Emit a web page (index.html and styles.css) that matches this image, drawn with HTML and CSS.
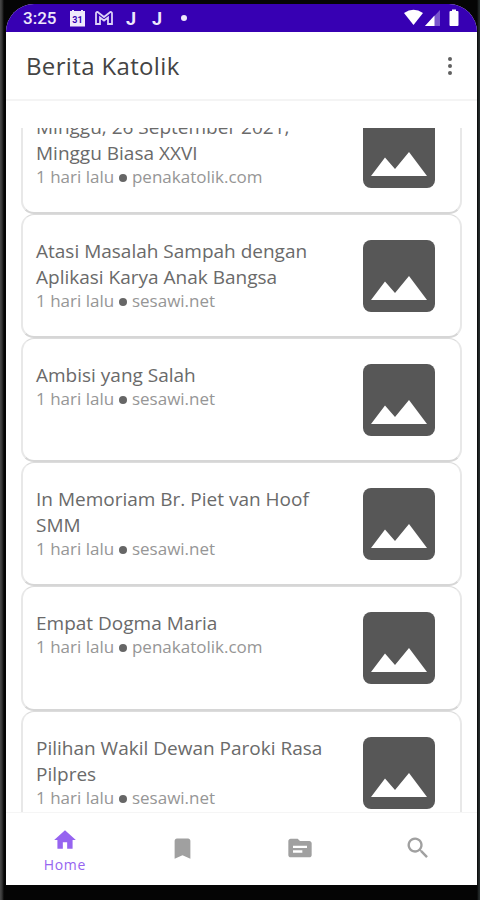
FILE: index.html
```html
<!DOCTYPE html>
<html lang="id">
<head>
  <meta charset="UTF-8">
  <title>Berita Katolik</title>
  <link rel="stylesheet" href="styles.css">
</head>
<body>
  <svg width="0" height="0" class="defs">
    <symbol id="picture" viewBox="0 0 72 72">
      <rect width="72" height="72" rx="8" fill="#575757"/>
      <path d="M8 60L22 41.500L32 53L46 36L64 60z" fill="#fff"/>
    </symbol>
  </svg>

  <div class="screen">
    <div class="status-bar">
      <span class="time">3:25</span>
      <svg class="calendar" width="17" height="17" viewBox="0 0 17 17">
        <path d="M1 1h2V0h2v1h7V0h2v1h2v15.500H1z" fill="#eee8fb"/>
        <text x="8.500" y="12.500" text-anchor="middle">31</text>
      </svg>
      <svg class="mail" width="18" height="14" viewBox="0 0 18 14">
        <path d="M1 13V2.500Q1 .5 3 1.200L9 6l6-4.800q2-.7 2 1.300V13h-4V6.500L9 9.500 5 6.500V13z" fill="none" stroke="#ddd2f7" stroke-width="1.800"/>
      </svg>
      <span class="letter">J</span>
      <span class="letter">J</span>
      <span class="dot"></span>
      <svg class="signals" width="56" height="18" viewBox="0 0 56 18">
        <path d="M0 4Q9.500-2.500 19 4L9.500 16z" fill="#fff"/>
        <path d="M36 1v16H21z" fill="#7a55cd"/>
        <path d="M30.500 6.500V17H21z" fill="#fff"/>
        <path d="M46.500 2H48V.5h4V2h1.500q1 0 1 1v13q0 1-1 1h-7q-1 0-1-1V3q0-1 1-1z" fill="#fff"/>
      </svg>
    </div>

    <header class="app-bar">
      <h1>Berita Katolik</h1>
      <div class="menu"><i></i><i></i><i></i></div>
    </header>

    <main class="news-list">
      <article class="card">
        <div class="text">
          <h2>Minggu, 26 September 2021,<br>Minggu Biasa XXVI</h2>
          <p>1 hari lalu <b></b> penakatolik.com</p>
        </div>
        <svg class="thumb"><use href="#picture"/></svg>
      </article>
      <article class="card">
        <div class="text">
          <h2>Atasi Masalah Sampah dengan<br>Aplikasi Karya Anak Bangsa</h2>
          <p>1 hari lalu <b></b> sesawi.net</p>
        </div>
        <svg class="thumb"><use href="#picture"/></svg>
      </article>
      <article class="card">
        <div class="text">
          <h2>Ambisi yang Salah</h2>
          <p>1 hari lalu <b></b> sesawi.net</p>
        </div>
        <svg class="thumb"><use href="#picture"/></svg>
      </article>
      <article class="card">
        <div class="text">
          <h2>In Memoriam Br. Piet van Hoof<br>SMM</h2>
          <p>1 hari lalu <b></b> sesawi.net</p>
        </div>
        <svg class="thumb"><use href="#picture"/></svg>
      </article>
      <article class="card">
        <div class="text">
          <h2>Empat Dogma Maria</h2>
          <p>1 hari lalu <b></b> penakatolik.com</p>
        </div>
        <svg class="thumb"><use href="#picture"/></svg>
      </article>
      <article class="card">
        <div class="text">
          <h2>Pilihan Wakil Dewan Paroki Rasa<br>Pilpres</h2>
          <p>1 hari lalu <b></b> sesawi.net</p>
        </div>
        <svg class="thumb"><use href="#picture"/></svg>
      </article>
    </main>

    <nav class="bottom-nav">
      <a class="active">
        <svg width="26" height="26" viewBox="0 0 24 24"><path d="M10 20v-6h4v6h5v-8h3L12 3 2 12h3v8z"/></svg>
        <span>Home</span>
      </a>
      <a><svg width="27" height="27" viewBox="0 0 24 24"><path d="M17 3H7c-1.100 0-2 .9-2 2v16l7-3 7 3V5c0-1.100-.9-2-2-2z"/></svg></a>
      <a><svg width="28" height="28" viewBox="0 0 24 24"><path d="M20 6h-8l-2-2H4c-1.100 0-2 .9-2 2v12c0 1.100.9 2 2 2h16c1.100 0 2-.9 2-2V8c0-1.100-.9-2-2-2zm-6 10H6v-2h8v2zm4-4H6v-2h12v2z"/></svg></a>
      <a><svg width="28" height="28" viewBox="0 0 24 24"><path d="M15.500 14h-.79l-.28-.27A6.500 6.500 0 1 0 13.730 14.430l.27.280v.79l5 4.990L20.490 19zm-6 0a4.500 4.500 0 1 1 0-9 4.500 4.500 0 0 1 0 9z"/></svg></a>
    </nav>
  </div>
</body>
</html>
```
FILE: styles.css
```css
* {
  box-sizing: border-box;
}
body {
  margin: 0;
  height: 900px;
  padding: 4px 3px 15px 6px;
  overflow: hidden;
  background: linear-gradient(to right, #4a4a4a 0, #333 2px, #050505 4px, #050505 477px, #252b2b 479px);
  background-color: #000;
  font-family: "Open Sans", sans-serif;
}
.defs {
  display: none;
}
.screen {
  display: flex;
  flex-direction: column;
  height: 881px;
  background: #fff;
  border-radius: 28px 28px 0 0;
  overflow: hidden;
}
.status-bar {
  display: flex;
  align-items: center;
  height: 28px;
  padding: 0 18px 0 17px;
  background: #3700b3;
  color: #eee8fb;
  font-family: Roboto, sans-serif;
}
.time {
  width: 46px;
  font-size: 17px;
  font-weight: 500;
}
.calendar text {
  font-size: 9px;
  font-weight: bold;
  fill: #3700b3;
}
.mail {
  margin-left: 9px;
}
.letter {
  width: 10px;
  margin-left: 13px;
  font-size: 18px;
  font-weight: 700;
}
.letter + .letter {
  margin-left: 16px;
}
.dot {
  width: 6px;
  height: 6px;
  margin-left: 19px;
  border-radius: 50%;
  background: #eee8fb;
}
.signals {
  margin-left: auto;
  margin-right: -1px;
}
.app-bar {
  display: flex;
  justify-content: space-between;
  align-items: center;
  height: 69px;
  padding: 0 25px 0 20px;
  border-bottom: 2px solid #f4f4f4;
}
.app-bar h1 {
  margin: 0;
  font-size: 24px;
  font-weight: 400;
  letter-spacing: 0.350px;
  color: #444;
}
.menu {
  display: flex;
  flex-direction: column;
  gap: 3px;
}
.menu i {
  width: 4px;
  height: 4px;
  border-radius: 50%;
  background: #606060;
}
.news-list {
  height: 684px;
  margin-top: 27px;
  padding: 0 15px;
  overflow: hidden;
}
.card {
  display: flex;
  justify-content: space-between;
  height: 124.200px;
  padding: 23px 25px 0 13px;
  border: 2px solid #e8e8e8;
  border-top-width: 1px;
  border-top-color: #dcdcdc;
  border-bottom-color: #d6d6d6;
  border-radius: 13px;
}
.card:first-child {
  margin-top: -38.350px;
}
.card h2 {
  margin: 0;
  font-size: 19px;
  line-height: 26px;
  font-weight: 400;
  color: #6a6a6a;
  white-space: nowrap;
}
.card p {
  margin: -1px 0 0;
  font-size: 17px;
  line-height: 23px;
  color: #969696;
  white-space: nowrap;
}
.card b {
  display: inline-block;
  width: 8px;
  height: 8px;
  margin-right: 1px;
  border-radius: 50%;
  background: #666;
  vertical-align: 1px;
}
.thumb {
  flex: none;
  width: 72px;
  height: 72px;
  margin-top: 2px;
}
.bottom-nav {
  display: grid;
  grid-template-columns: repeat(4, 1fr);
  height: 73px;
  border-top: 1px solid #f5f5f5;
}
.bottom-nav a {
  display: flex;
  flex-direction: column;
  align-items: center;
  justify-content: center;
  padding-bottom: 2px;
  color: #a0a0a0;
}
.bottom-nav svg {
  fill: currentColor;
}
.bottom-nav .active {
  gap: 2px;
  padding: 3px 0 0;
  color: #9664f0;
}
.bottom-nav span {
  font-size: 14px;
  line-height: 20px;
  letter-spacing: 0.7px;
}
```
